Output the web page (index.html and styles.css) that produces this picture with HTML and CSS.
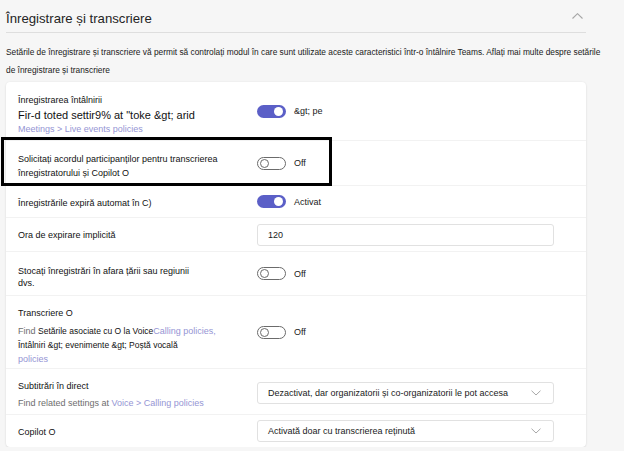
FILE: index.html
```html
<!DOCTYPE html>
<html lang="ro">
<head>
<meta charset="utf-8">
<title>Înregistrare și transcriere</title>
<link rel="stylesheet" href="styles.css">
</head>
<body>
<main class="page">
  <header class="section-head">
    <h2 class="section-title">Înregistrare și transcriere</h2>
    <svg class="chevron-up" width="11" height="6" viewBox="0 0 11 6"><path d="M0.5 5.5 L5.5 0.7 L10.5 5.5" fill="none" stroke="#a6a6a6" stroke-width="1.1"/></svg>
  </header>
  <p class="section-desc">Setările de înregistrare și transcriere vă permit să controlați modul în care sunt utilizate aceste caracteristici într-o întâlnire Teams. Aflați mai multe despre setările<br>de înregistrare și transcriere</p>

  <section class="card">
    <div class="row row-meeting">
      <div class="row-text">
        <div class="label">Înregistrarea întâlnirii</div>
        <div class="label-main">Fir-d toted settir9% at "toke &amp;gt; arid</div>
        <div class="link">Meetings &gt; Live events policies</div>
      </div>
      <div class="row-control">
        <span class="toggle toggle-on"><span class="knob"></span></span>
        <span class="toggle-label">&amp;gt; pe</span>
      </div>
    </div>

    <div class="row row-consent">
      <span class="highlight"></span>
      <div class="row-text">
        <div class="label">Solicitați acordul participanților pentru transcrierea</div>
        <div class="label">înregistratorului și Copilot O</div>
      </div>
      <div class="row-control">
        <span class="toggle toggle-off"><span class="knob"></span></span>
        <span class="toggle-label">Off</span>
      </div>
    </div>

    <div class="row row-expire">
      <div class="row-text">
        <div class="label">Înregistrările expiră automat în C)</div>
      </div>
      <div class="row-control">
        <span class="toggle toggle-on"><span class="knob"></span></span>
        <span class="toggle-label">Activat</span>
      </div>
    </div>

    <div class="row row-default">
      <div class="row-text">
        <div class="label">Ora de expirare implicită</div>
      </div>
      <div class="row-control">
        <div class="field">120</div>
      </div>
    </div>

    <div class="row row-store">
      <div class="row-text">
        <div class="label">Stocați înregistrări în afara țării sau regiunii</div>
        <div class="label">dvs.</div>
      </div>
      <div class="row-control">
        <span class="toggle toggle-off"><span class="knob"></span></span>
        <span class="toggle-label">Off</span>
      </div>
    </div>

    <div class="row row-transcript">
      <div class="row-text">
        <div class="label">Transcriere O</div>
        <div class="hint"><span class="muted">Find </span><span class="dark">Setările asociate cu O la Voice</span><span class="link-inline">Calling policies,</span><br><span class="dark">Întâlniri &amp;gt; evenimente &amp;gt; Poștă vocală</span><br><span class="link-inline">policies</span></div>
      </div>
      <div class="row-control">
        <span class="toggle toggle-off"><span class="knob"></span></span>
        <span class="toggle-label">Off</span>
      </div>
    </div>

    <div class="row row-captions">
      <div class="row-text">
        <div class="label label-sm">Subtitrări în direct</div>
        <div class="hint hint-gap"><span class="muted">Find related settings at </span><span class="link-inline">Voice &gt; Calling policies</span></div>
      </div>
      <div class="row-control">
        <div class="field select">
          <span>Dezactivat, dar organizatorii și co-organizatorii le pot accesa</span>
          <svg class="chevron-down" width="10" height="6" viewBox="0 0 10 6"><path d="M0.5 0.7 L5 5 L9.5 0.7" fill="none" stroke="#a8a8a8" stroke-width="1"/></svg>
        </div>
      </div>
    </div>

    <div class="row row-copilot">
      <div class="row-text">
        <div class="label">Copilot O</div>
      </div>
      <div class="row-control">
        <div class="field select">
          <span>Activată doar cu transcrierea reținută</span>
          <svg class="chevron-down" width="10" height="6" viewBox="0 0 10 6"><path d="M0.5 0.7 L5 5 L9.5 0.7" fill="none" stroke="#a8a8a8" stroke-width="1"/></svg>
        </div>
      </div>
    </div>
  </section>
</main>
</body>
</html>
```

FILE: styles.css
```css
* { box-sizing: border-box; }

html, body {
  margin: 0;
  padding: 0;
  background: #f6f6f6;
}

body {
  font-family: "Liberation Sans", Arial, sans-serif;
  color: #242424;
}

.page {
  padding-left: 6px;
  width: 586px;
}

.section-head {
  display: flex;
  align-items: center;
  justify-content: space-between;
  padding: 9px 3px 3px 0;
  border-bottom: 1px solid #dedede;
}

.section-title {
  margin: 0;
  font-size: 13.2px;
  font-weight: normal;
  line-height: 20px;
  color: #242424;
}

.chevron-up {
  display: block;
  margin-top: -6px;
}

.section-desc {
  margin: 10px 0 3px;
  width: 614px;
  font-size: 8.35px;
  line-height: 18px;
  color: #1a1a1a;
}

.card {
  background: #fff;
  border-radius: 4px;
  box-shadow: 0 0 2px rgba(0, 0, 0, 0.08), 0 1px 2px rgba(0, 0, 0, 0.08);
}

.row {
  position: relative;
  display: flex;
  align-items: stretch;
  padding-left: 12px;
  border-bottom: 1px solid #f2f2f2;
}

.row:last-child { border-bottom: none; }

.row-text {
  width: 239px;
  flex: none;
}

.row-control {
  display: flex;
  align-items: center;
  flex: 1;
}

.label {
  font-size: 9px;
  line-height: 14px;
  color: #111;
}

.label-main {
  font-size: 11px;
  line-height: 16px;
  color: #111;
}

.link {
  font-size: 9px;
  line-height: 12px;
  color: #9595d4;
}

.hint {
  font-size: 9px;
  line-height: 14px;
  margin-top: 4px;
}

.hint-gap { margin-top: 3px; }

.muted { color: #6e6e6e; }
.dark { color: #111; font-size: 8.5px; }
.link-inline { color: #9595d4; }

/* per-row spacing */
.row-meeting .row-text { padding: 11px 0 5px; }
.row-consent .row-text { padding: 11px 0 5px; }
.row-expire .row-text { padding: 10px 0 7px; }
.row-default .row-text { padding: 10px 0 9px; }
.row-store .row-text { padding: 13px 0 6px; }
.row-store .label { line-height: 12px; }
.row-transcript .row-text { padding: 10px 0 2px; }
.row-captions .row-text { padding: 10px 0 4px; }
.row-copilot .row-text { padding: 10px 0 8px; }

.row-captions .row-control { padding-top: 3px; }

.toggle {
  position: relative;
  display: inline-block;
  width: 29px;
  height: 13px;
  border-radius: 7px;
  flex: none;
}

.toggle .knob {
  position: absolute;
  top: 2px;
  width: 9px;
  height: 9px;
  border-radius: 50%;
}

.toggle-on { background: #5b5fc7; }
.toggle-on .knob { right: 3px; background: #fff; }

.toggle-off { background: #fff; border: 1px solid #6b6b6b; }
.toggle-off .knob { left: 2px; top: 1px; border: 1px solid #6b6b6b; background: #fff; }

.toggle-label {
  margin-left: 8px;
  font-size: 9px;
  color: #1a1a1a;
}

.field {
  display: flex;
  align-items: center;
  justify-content: space-between;
  width: 297px;
  height: 22px;
  padding: 0 12px 0 10px;
  border: 1px solid #e1e1e1;
  border-radius: 3px;
  font-size: 9px;
  color: #1a1a1a;
  background: #fff;
}

.chevron-down { display: block; flex: none; }

.highlight {
  position: absolute;
  left: -5px;
  top: -4px;
  width: 331px;
  height: 49px;
  border: 3px solid #000;
  pointer-events: none;
}
```
